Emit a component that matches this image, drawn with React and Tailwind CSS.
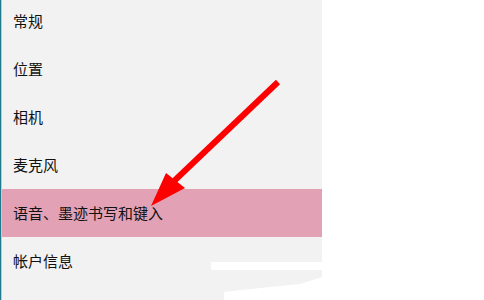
export default function App() {
  const items = ["常规", "位置", "相机", "麦克风", "语音、墨迹书写和键入", "帐户信息", ""];
  return (
    <div className="relative w-[484px] h-[300px] overflow-hidden bg-white flex" style={{ fontFamily: '"Noto Sans CJK SC", "Noto Sans", sans-serif' }}>
      <div className="w-[322px] h-full bg-[#f2f2f2] flex">
        <div className="w-px h-full bg-[#1f7a8c]" />
        <div className="w-px h-full bg-[#a8d4e0]" />
        <div className="flex-1 flex flex-col -mt-[3px]">
          {items.map((t, i) => (
            <div
              key={i}
              className={`h-[48px] shrink-0 flex items-center pl-[11px] text-[15px] text-[#111] ${i === 4 ? "bg-[#e3a1b5]" : ""}`}
            >
              {t}
            </div>
          ))}
        </div>
      </div>
      <div className="absolute left-[211px] top-[262px] w-[111px] h-[8px] bg-white" />
      <svg className="absolute left-0 top-0" width="484" height="300" viewBox="0 0 484 300">
        <polygon points="224,300 224,292 260,288 300,284 322,277 322,300" fill="#ffffff" />
        <line x1="278" y1="82" x2="172" y2="183" stroke="#ff0000" strokeWidth="6" />
        <polygon points="151,206 166,173 185,188" fill="#ff0000" />
      </svg>
    </div>
  );
}
